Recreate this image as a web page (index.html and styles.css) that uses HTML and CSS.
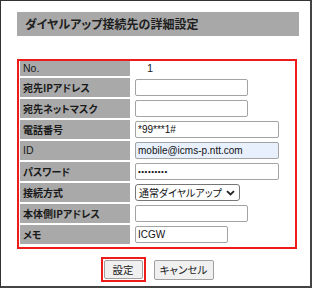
FILE: index.html
```html
<!DOCTYPE html>
<html lang="ja">
<head>
<meta charset="utf-8">
<link rel="stylesheet" href="styles.css">
</head>
<body>
<div class="frame">
  <div class="title">ダイヤルアップ接続先の詳細設定</div>
  <div class="panel">
    <div class="row row-no"><div class="label label-latin">No.</div><div class="value"><span class="num">1</span></div></div>
    <div class="row"><div class="label">宛先IPアドレス</div><div class="value"><input class="inp w-mid" type="text" value=""></div></div>
    <div class="row"><div class="label">宛先ネットマスク</div><div class="value"><input class="inp w-mid" type="text" value=""></div></div>
    <div class="row"><div class="label">電話番号</div><div class="value"><input class="inp w-long" type="text" value="*99***1#"></div></div>
    <div class="row"><div class="label label-latin">ID</div><div class="value"><input class="inp w-long autofill" type="text" value="mobile@icms-p.ntt.com"></div></div>
    <div class="row"><div class="label">パスワード</div><div class="value"><input class="inp w-long pw" type="password" value="123456789"></div></div>
    <div class="row"><div class="label">接続方式</div><div class="value"><div class="select"><span class="sel-text">通常ダイヤルアップ</span><svg class="chev" width="9" height="6" viewBox="0 0 9 6"><path d="M1 1.2 L4.5 4.5 L8 1.2" fill="none" stroke="#222" stroke-width="1.8"/></svg></div></div></div>
    <div class="row"><div class="label">本体側IPアドレス</div><div class="value"><input class="inp w-mid" type="text" value=""></div></div>
    <div class="row"><div class="label">メモ</div><div class="value"><input class="inp w-short" type="text" value="ICGW"></div></div>
  </div>
  <div class="buttons">
    <span class="hl"><button class="btn btn-set" type="button">設定</button></span>
    <button class="btn btn-cancel" type="button">キャンセル</button>
  </div>
</div>
</body>
</html>
```

FILE: styles.css
```css
html, body {
  margin: 0;
  padding: 0;
  background: #ffffff;
}
body {
  font-family: "Noto Sans CJK JP", "Liberation Sans", sans-serif;
  font-feature-settings: "palt";
  color: #222;
}
.frame {
  width: 312px;
  height: 288px;
  box-sizing: border-box;
  border: 1px solid #333;
  border-right: 2px solid #444;
  border-bottom: 2px solid #444;
  padding: 11px 0 0 16px;
}
.title {
  width: 282px;
  height: 24px;
  box-sizing: border-box;
  background: #a8a8a8;
  padding-left: 8px;
  font-size: 12px;
  font-weight: bold;
  line-height: 24px;
  color: #1e1e1e;
}
.panel {
  margin-top: 23px;
  width: 280px;
  box-sizing: border-box;
  border: 2px solid #ee1b1b;
  padding: 0 0 3px 1px;
  display: flex;
  flex-direction: column;
  gap: 2px;
}
.row {
  display: flex;
  gap: 2px;
  height: 19px;
}
.row-no {
  height: 15px;
}
.label {
  width: 110px;
  flex: none;
  background: #a9a9a9;
  font-size: 10px;
  font-weight: bold;
  line-height: 19px;
  padding-left: 3px;
  box-sizing: border-box;
  color: #1a1a1a;
  white-space: nowrap;
}
.label-latin {
  font-family: "Liberation Sans", sans-serif;
  font-weight: normal;
  font-size: 10.5px;
}
.row-no .label {
  line-height: 15px;
}
.value {
  flex: 1;
  display: flex;
  align-items: center;
}
.num {
  font-family: "Liberation Sans", sans-serif;
  font-size: 11px;
  padding-left: 15px;
  line-height: 15px;
}
.inp {
  margin: 0 0 0 3px;
  height: 17px;
  box-sizing: border-box;
  border: 1px solid #a3a3a3;
  border-radius: 2px;
  background: #fff;
  padding: 0 2px;
  font-family: "Liberation Sans", sans-serif;
  font-size: 10px;
  color: #111;
  outline: none;
}
.pw {
  font-size: 8px;
  letter-spacing: 0.5px;
}
.w-mid { width: 113px; }
.w-long { width: 144px; }
.w-short { width: 93px; }
.autofill {
  background: #e8f0fe;
}
.select {
  margin-left: 3px;
  width: 105px;
  height: 17px;
  box-sizing: border-box;
  border: 1px solid #767676;
  border-radius: 3px;
  background: #fff;
  display: flex;
  align-items: center;
  justify-content: space-between;
  padding: 0 4px 0 3px;
  font-size: 10px;
  color: #111;
}
.chev {
  display: block;
  flex: none;
}
.buttons {
  margin-top: 8px;
  width: 280px;
  display: flex;
  justify-content: center;
  align-items: center;
  gap: 8px;
}
.hl {
  border: 2px solid #ee1b1b;
  padding: 1px;
  display: flex;
}
.btn {
  height: 19px;
  box-sizing: border-box;
  margin: 0;
  border: 1px solid #a0a0a0;
  border-radius: 2px;
  background: #f0f0f0;
  font-family: "Noto Sans CJK JP", sans-serif;
  font-feature-settings: "palt";
  font-size: 10.5px;
  color: #222;
  padding: 0;
  line-height: 17px;
}
.btn-set { width: 39px; }
.btn-cancel { width: 60px; height: 20px; }
```
